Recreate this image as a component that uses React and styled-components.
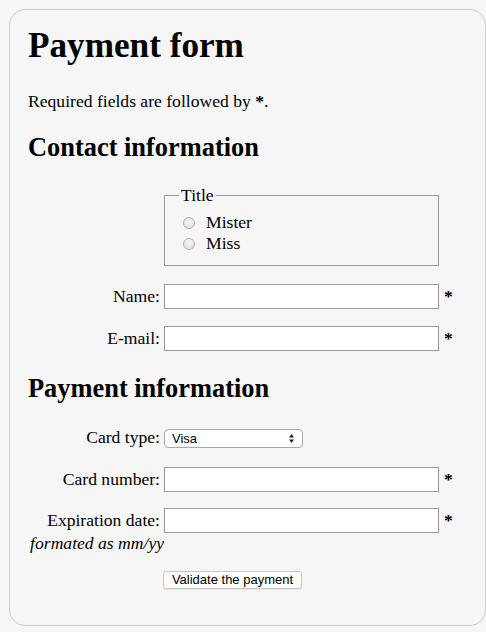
import React from "react";
import styled, { createGlobalStyle } from "styled-components";

const GlobalStyle = createGlobalStyle`
  html, body {
    margin: 0;
    padding: 0;
    background: #f6f6f6;
  }
  body {
    font-family: "Liberation Serif", "Times New Roman", serif;
    font-size: 17.6px;
    color: #000;
  }
`;

function App() {
  return (
    <>
      <GlobalStyle />
      <Card onSubmit={(e) => e.preventDefault()}>
        <Title>Payment form</Title>
        <Note>
          Required fields are followed by <Req>*</Req>.
        </Note>

        <Section $top={21}>Contact information</Section>
        <Fieldset>
          <Legend>Title</Legend>
          <RadioList>
            <RadioItem>
              <Radio type="radio" name="title" id="title_1" />
              <label htmlFor="title_1">Mister</label>
            </RadioItem>
            <RadioItem>
              <Radio type="radio" name="title" id="title_2" />
              <label htmlFor="title_2">Miss</label>
            </RadioItem>
          </RadioList>
        </Fieldset>

        <Row $top={18}>
          <FieldLabel htmlFor="name">Name:</FieldLabel>
          <TextInput id="name" type="text" />
          <Star>*</Star>
        </Row>
        <Row $top={17}>
          <FieldLabel htmlFor="mail">E-mail:</FieldLabel>
          <TextInput id="mail" type="email" />
          <Star>*</Star>
        </Row>

        <Section $top={22}>Payment information</Section>
        <Row $top={24}>
          <FieldLabel htmlFor="card">Card type:</FieldLabel>
          <SelectWrap>
            <Select id="card" defaultValue="visa">
              <option value="visa">Visa</option>
              <option value="mc">Mastercard</option>
              <option value="amex">American Express</option>
            </Select>
            <Arrows width="5" height="9" viewBox="0 0 5 9">
              <path d="M2.5 0 L5 3.5 L0 3.5 Z" fill="#222" />
              <path d="M0 5.5 L5 5.5 L2.5 9 Z" fill="#222" />
            </Arrows>
          </SelectWrap>
        </Row>
        <Row $top={19}>
          <FieldLabel htmlFor="number">Card number:</FieldLabel>
          <TextInput id="number" type="tel" />
          <Star>*</Star>
        </Row>
        <Row $top={16}>
          <FieldLabel htmlFor="date">Expiration date:</FieldLabel>
          <TextInput id="date" type="text" />
          <Star>*</Star>
        </Row>
        <Hint>formated as mm/yy</Hint>

        <Submit type="submit">Validate the payment</Submit>
      </Card>
    </>
  );
}

export default App;

const Card = styled.form`
  box-sizing: border-box;
  width: 477px;
  margin: 9px 0 0 9px;
  padding: 16px 18px 36px;
  border: 1px solid #cfcfcf;
  border-radius: 16px;
  background: #f6f6f6;
`;

const Title = styled.h1`
  margin: 0;
  font-size: 35.2px;
  line-height: 40px;
  font-weight: bold;
`;

const Note = styled.p`
  margin: 25px 0 0;
  line-height: 20px;
`;

const Req = styled.strong`
  font-weight: bold;
`;

const Section = styled.h2`
  margin: ${(p) => p.$top}px 0 0;
  font-size: 26.4px;
  line-height: 30px;
  font-weight: bold;
`;

const Fieldset = styled.fieldset`
  box-sizing: border-box;
  width: 275px;
  margin: 23px 0 0 136px;
  padding: 7px 14px 11px;
  border: 1px solid #999;
  min-inline-size: 0;
`;

const Legend = styled.legend`
  padding: 0 2px;
  line-height: 20px;
`;

const RadioList = styled.ul`
  margin: 0;
  padding: 0;
  list-style: none;
`;

const RadioItem = styled.li`
  display: flex;
  align-items: center;
  height: 21px;
  line-height: 21px;
`;

const Radio = styled.input`
  appearance: none;
  box-sizing: border-box;
  width: 12px;
  height: 12px;
  margin: 0 11px 0 4px;
  border: 1px solid #b3b3b3;
  border-radius: 50%;
  background: radial-gradient(circle at 50% 40%, #f2f2f2 0%, #dcdcdc 100%);
  box-shadow: inset 0 1px 1px rgba(255, 255, 255, 0.6);
`;

const Row = styled.div`
  display: flex;
  align-items: baseline;
  margin-top: ${(p) => p.$top}px;
`;

const FieldLabel = styled.label`
  width: 132px;
  margin-right: 4px;
  text-align: right;
  line-height: 20px;
  white-space: nowrap;
  flex-shrink: 0;
`;

const TextInput = styled.input`
  box-sizing: border-box;
  width: 275px;
  height: 25px;
  margin: 0;
  padding: 0 2px;
  border: 1px solid #999;
  background: #fff;
  font: 17.6px "Liberation Sans", Arial, sans-serif;
  outline: none;
`;

const Star = styled.strong`
  margin-left: 5px;
  font-weight: bold;
`;

const SelectWrap = styled.span`
  position: relative;
  display: inline-flex;
`;

const Select = styled.select`
  appearance: none;
  box-sizing: border-box;
  width: 139px;
  height: 19px;
  margin: 0;
  padding: 0 16px 0 7px;
  border: 1px solid #a9a9a9;
  border-radius: 4px;
  background: #fff;
  color: #000;
  font: 13px "Liberation Sans", Arial, sans-serif;
  outline: none;
`;

const Arrows = styled.svg`
  position: absolute;
  right: 9px;
  top: 5px;
  pointer-events: none;
`;

const Hint = styled.em`
  display: flex;
  justify-content: flex-end;
  width: 136px;
  white-space: nowrap;
  line-height: 20px;
  font-style: italic;
`;

const Submit = styled.button`
  display: block;
  box-sizing: border-box;
  width: 139px;
  height: 18px;
  margin: 18px 0 0 135px;
  padding: 0;
  border: 1px solid #c6c6c6;
  border-radius: 3px;
  background: #fff;
  box-shadow: 0 1px 0 rgba(0, 0, 0, 0.06);
  color: #000;
  font: 13px "Liberation Sans", Arial, sans-serif;
  line-height: 16px;
`;
